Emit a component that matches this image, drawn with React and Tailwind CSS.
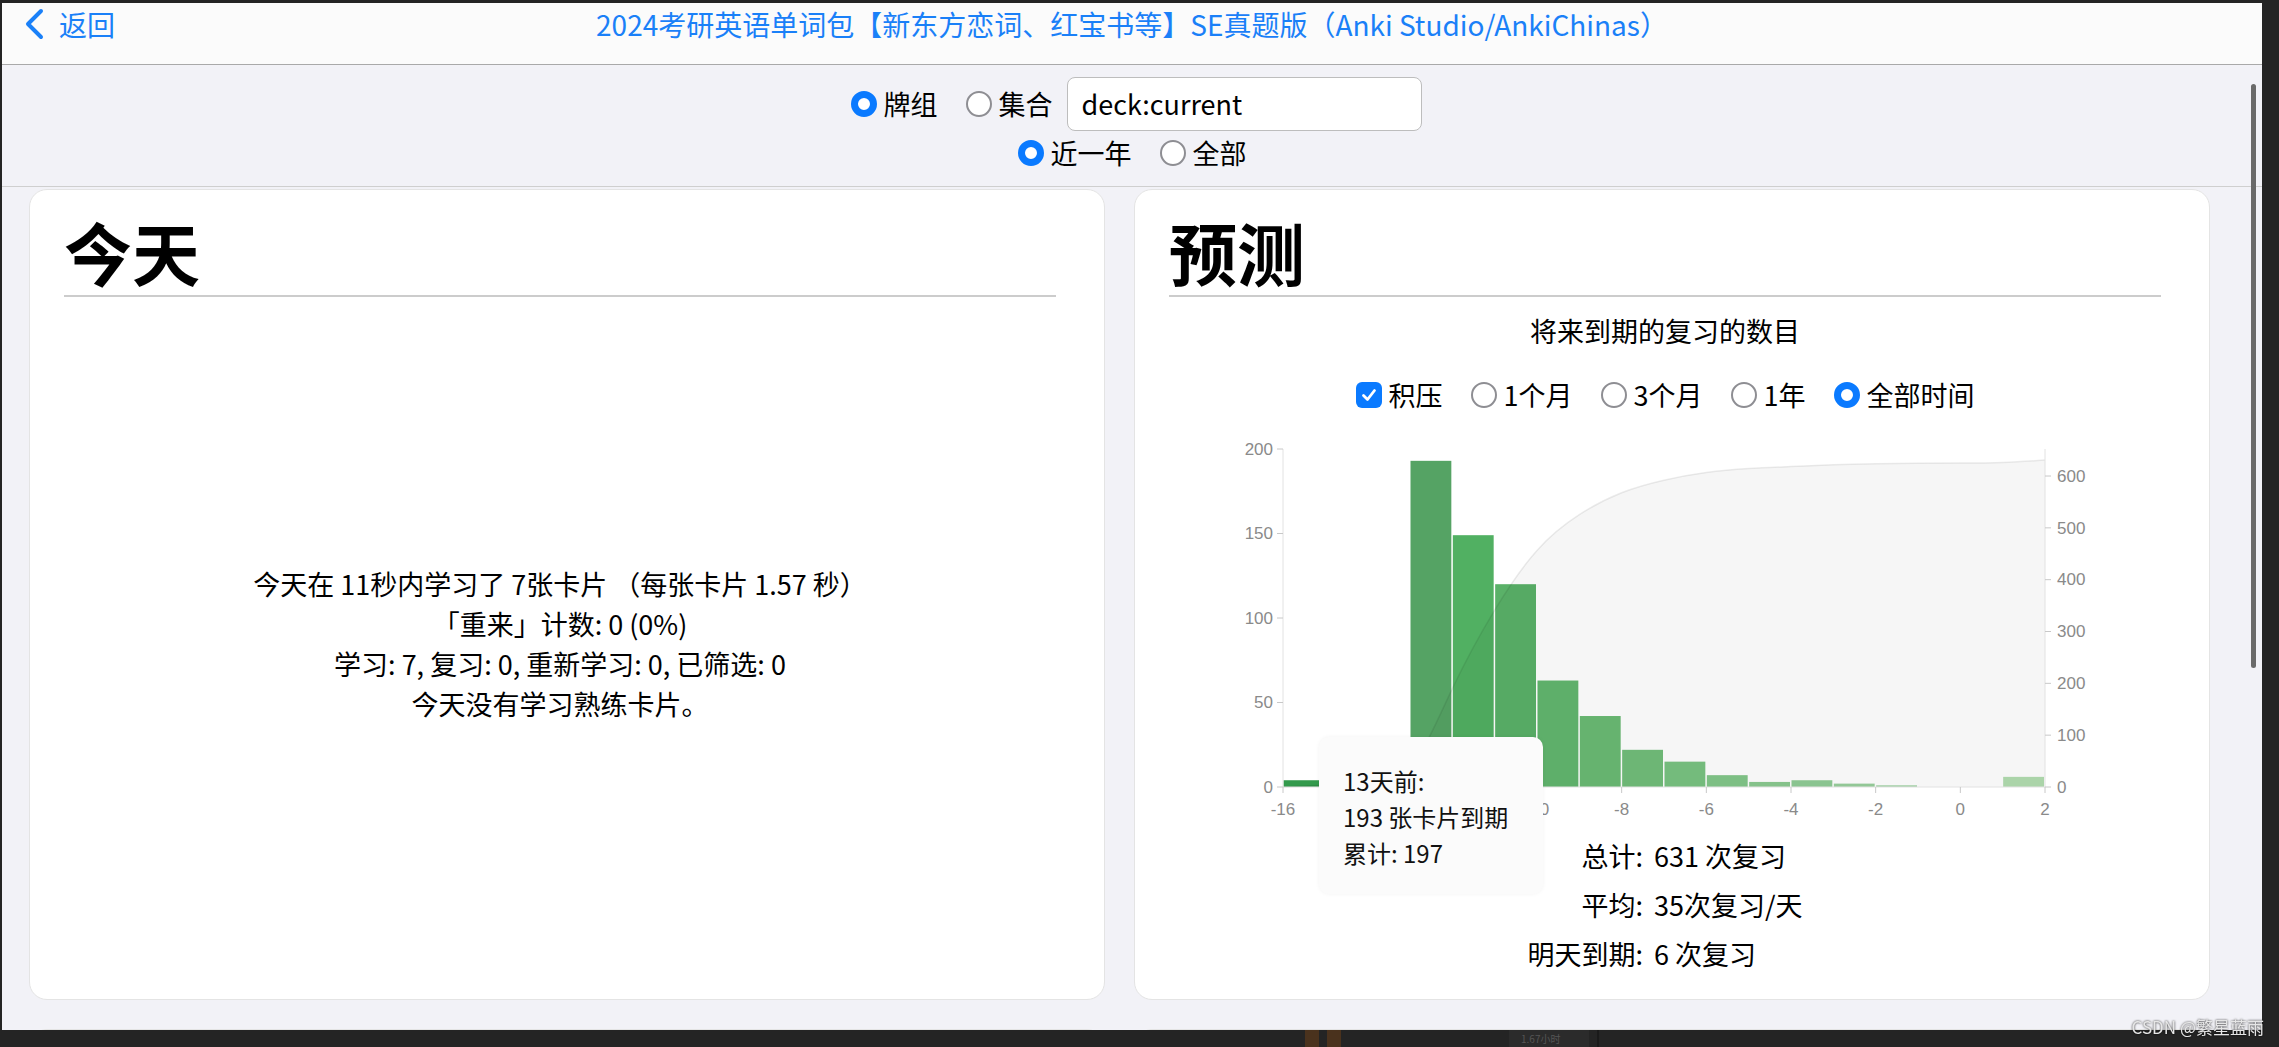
import React from "react"

// 未来到期：每一天的复习数（按区间起点）
const BINS = [
  [-16, 4, "#339a4c"],
  [-15, 0],
  [-14, 0],
  [-13, 193, "#55a364"],
  [-12, 149, "#51b062"],
  [-11, 120, "#5ab168"],
  [-10, 63, "#62b66e"],
  [-9, 42, "#6aba74"],
  [-8, 22, "#71bd7a"],
  [-7, 15, "#79c281"],
  [-6, 7, "#82c689"],
  [-5, 3, "#8aca90"],
  [-4, 4, "#90cc96"],
  [-3, 2, "#98cf9c"],
  [-2, 1, "#a0d3a3"],
  [-1, 0],
  [0, 0],
  [1, 6, "#b2dcb0"],
]

const X0 = 114
const X1 = 876
const Y0 = 356
const X = (d) => X0 + ((d + 16) * (X1 - X0)) / 18
const YL = (v) => Y0 - v * 1.69
const YR = (v) => Y0 - v * 0.5183

// d3 curveBasis
function basisPath(pts) {
  let [x0, y0] = pts[0]
  let [x1, y1] = pts[1]
  let d = `M${x0},${y0}L${(5 * x0 + x1) / 6},${(5 * y0 + y1) / 6}`
  const seg = (ax, ay, bx, by, cx, cy) =>
    `C${(2 * ax + bx) / 3},${(2 * ay + by) / 3},${(ax + 2 * bx) / 3},${(ay + 2 * by) / 3},${(ax + 4 * bx + cx) / 6},${(ay + 4 * by + cy) / 6}`
  for (let i = 2; i < pts.length; i++) {
    const [x, y] = pts[i]
    d += seg(x0, y0, x1, y1, x, y)
    x0 = x1; y0 = y1; x1 = x; y1 = y
  }
  d += seg(x0, y0, x1, y1, x1, y1)
  d += `L${x1},${y1}`
  return d
}

function Radio({ on }) {
  if (on) return <span className="inline-block w-[26px] h-[26px] rounded-full border-[7px] border-[#0a7aff] bg-white shrink-0" />
  return <span className="inline-block w-[26px] h-[26px] rounded-full border-2 border-[#8e8e93] bg-white shrink-0" />
}

function Check() {
  return (
    <span className="w-[26px] h-[26px] rounded-[6px] bg-[#0a7aff] flex items-center justify-center shrink-0">
      <svg width="18" height="18" viewBox="0 0 18 18">
        <path d="M3.5 9.5 L7.5 13.5 L14.5 4.5" fill="none" stroke="white" strokeWidth="2.8" strokeLinecap="round" strokeLinejoin="round" />
      </svg>
    </span>
  )
}

function Opt({ control, label }) {
  return (
    <label className="flex items-center gap-[7px]">
      {control}
      <span>{label}</span>
    </label>
  )
}

function Chart() {
  let cum = 0
  const pts = [[X(-16), YR(0)]]
  BINS.forEach(([d, v]) => {
    cum += v
    pts.push([X(d + 1), YR(cum)])
  })
  const line = basisPath(pts)
  const area = `${line}L${X(2)},${Y0}L${X(-16)},${Y0}Z`
  const bw = (X1 - X0) / 18

  return (
    <div className="relative h-[400px] mt-[16px]">
      <svg width="994" height="400" className="block">
        {BINS.filter((b) => b[1] > 0).map(([d, v, c]) => (
          <rect key={d} x={X(d) + 0.5} y={YL(v)} width={bw - 1.5} height={Y0 - YL(v)} fill={c} />
        ))}
        <path d={area} fill="rgba(0,0,0,0.035)" />
        <path d={line} fill="none" stroke="rgba(0,0,0,0.08)" strokeWidth="1.5" />

        {/* left axis */}
        <line x1={X0} y1={YL(200)} x2={X0} y2={Y0} stroke="#e2e2e2" />
        {[0, 50, 100, 150, 200].map((v) => (
          <g key={v}>
            <line x1={X0 - 6} y1={YL(v)} x2={X0} y2={YL(v)} stroke="#c8c8c8" />
            <text x={X0 - 10} y={YL(v)} dy="0.34em" textAnchor="end" fontSize="17" fill="#8a8a8a" fontFamily="Liberation Sans, sans-serif">{v}</text>
          </g>
        ))}

        {/* right axis */}
        <line x1={X1} y1={YL(200)} x2={X1} y2={Y0} stroke="#e2e2e2" />
        {[0, 100, 200, 300, 400, 500, 600].map((v) => (
          <g key={v}>
            <line x1={X1} y1={YR(v)} x2={X1 + 6} y2={YR(v)} stroke="#c8c8c8" />
            <text x={X1 + 12} y={YR(v)} dy="0.34em" fontSize="17" fill="#8a8a8a" fontFamily="Liberation Sans, sans-serif">{v}</text>
          </g>
        ))}

        {/* bottom axis; -14 and -12 sit under the tooltip */}
        <line x1={X0} y1={Y0} x2={X1} y2={Y0} stroke="#e2e2e2" />
        {[-16, -14, -12, -10, -8, -6, -4, -2, 0, 2].map((d) => (
          <g key={d}>
            <line x1={X(d)} y1={Y0} x2={X(d)} y2={Y0 + 6} stroke="#c8c8c8" />
            {d !== -14 && d !== -12 && (
              <text x={X(d)} y={Y0 + 22} dy="0.34em" textAnchor="middle" fontSize="17" fill="#8a8a8a" fontFamily="Liberation Sans, sans-serif">{d}</text>
            )}
          </g>
        ))}
      </svg>

      <div className="absolute left-[150px] top-[306px] w-[224px] h-[157px] rounded-[10px] bg-[#fbfbfb] shadow-[0_0_4px_rgba(0,0,0,0.05)] px-[24px] pt-[26px] text-[24px] leading-[36px] text-[#111]">
        <div>13天前:</div>
        <div>193 张卡片到期</div>
        <div>累计: 197</div>
      </div>
    </div>
  )
}

function Card({ title, children }) {
  return (
    <div className="bg-white rounded-[18px] border border-[#e4e4e4] pl-[34px] pr-[48px] pt-[25px] pb-[21px] flex flex-col">
      <h1 className="text-[68px] leading-[74px] font-semibold pb-[6px] border-b-2 border-[#cccccc] text-black">{title}</h1>
      {children}
    </div>
  )
}

export default function App() {
  return (
    <div className="w-[2279px] h-[1047px] bg-[#242424] overflow-hidden relative pt-[3px] pl-[2px] font-['Noto_Sans_CJK_SC',sans-serif]">
      <div className="relative w-[2260px] h-[1027px] bg-[#f2f2f7] flex flex-col overflow-hidden">
        {/* header */}
        <div className="h-[62px] shrink-0 bg-[#fbfbfb] border-b border-[#a9a9a9]">
          <div className="grid grid-cols-[1fr_auto_1fr] h-[40px] items-center">
            <div className="flex items-center pl-[21px] gap-[14px] text-[#1a80f8] text-[28px]">
              <svg width="22" height="32" viewBox="0 0 22 32">
                <path d="M18 3 L5 16 L18 29" fill="none" stroke="#1a80f8" strokeWidth="4" strokeLinecap="round" strokeLinejoin="round" />
              </svg>
              <span>返回</span>
            </div>
            <div className="text-[#1a80f8] text-[28px] whitespace-nowrap">
              2024考研英语单词包【新东方恋词、红宝书等】SE真题版（Anki Studio/AnkiChinas）
            </div>
            <div />
          </div>
        </div>

        {/* controls */}
        <div className="shrink-0 h-[122px] border-b border-[#cfcfcf] pt-[12px] flex flex-col items-center gap-[2px] text-[27px] text-black">
          <div className="h-[54px] flex items-center pl-[8px]">
            <Opt control={<Radio on />} label="牌组" />
            <div className="ml-[28px]"><Opt control={<Radio />} label="集合" /></div>
            <div className="ml-[14px] w-[355px] h-[54px] bg-white border border-[#bdbdbd] rounded-[8px] flex items-center px-[14px]">deck:current</div>
          </div>
          <div className="h-[40px] flex items-center gap-[28px]">
            <Opt control={<Radio on />} label="近一年" />
            <Opt control={<Radio />} label="全部" />
          </div>
        </div>

        {/* scroll content */}
        <div className="flex-1 pt-[2px] pl-[27px] pr-[52px] text-black">
          <div className="grid grid-cols-2 gap-[29px]">
            <Card title="今天">
              <div className="flex-1 flex flex-col items-center justify-center pt-[13px] text-[27px] leading-[40px] text-center">
                <div>今天在 11秒内学习了 7张卡片 （每张卡片 1.57 秒）</div>
                <div>「重来」计数: 0 (0%)</div>
                <div>学习: 7, 复习: 0, 重新学习: 0, 已筛选: 0</div>
                <div>今天没有学习熟练卡片。</div>
              </div>
            </Card>
            <Card title="预测">
              <div className="mt-[14px] text-center text-[27px] leading-[40px]">将来到期的复习的数目</div>
              <div className="mt-[24px] h-[40px] flex items-center justify-center gap-[28px] text-[27px]">
                <Opt control={<Check />} label="积压" />
                <Opt control={<Radio />} label="1个月" />
                <Opt control={<Radio />} label="3个月" />
                <Opt control={<Radio />} label="1年" />
                <Opt control={<Radio on />} label="全部时间" />
              </div>
              <Chart />
              <div className="grid grid-cols-[auto_auto] justify-center gap-x-[11px] text-[27px] leading-[49px]">
                <div className="text-right">总计:</div>
                <div>631 次复习</div>
                <div className="text-right">平均:</div>
                <div>35次复习/天</div>
                <div className="text-right">明天到期:</div>
                <div>6 次复习</div>
              </div>
            </Card>
            <div className="h-[200px] bg-white rounded-[18px] border border-[#e4e4e4]" />
            <div className="h-[200px] bg-white rounded-[18px] border border-[#e4e4e4]" />
          </div>
        </div>

        {/* scrollbar thumb */}
        <div className="absolute right-[6px] top-[81px] w-[5px] h-[584px] rounded-full bg-[#6a6a6a]" />
      </div>

      {/* blurred window behind, bottom strip */}
      <div className="flex h-[17px] items-stretch pl-[1303px] gap-[8px]">
        <div className="w-[14px] bg-[#4a321d]" />
        <div className="w-[14px] bg-[#4a321d]" />
        <div className="w-[80px] ml-[160px] bg-[#2b2b2b] text-[10px] text-[#555] leading-[17px] pl-[12px]">1.67小时</div>
        <div className="w-[2px] bg-[#1a1a1a]" />
      </div>

      <div className="absolute right-[15px] bottom-[10px] text-[17px] leading-[20px] text-[#e6e6e6] drop-shadow-[0_0_1px_rgba(0,0,0,0.8)]">
        CSDN @繁星蓝雨
      </div>
    </div>
  )
}
